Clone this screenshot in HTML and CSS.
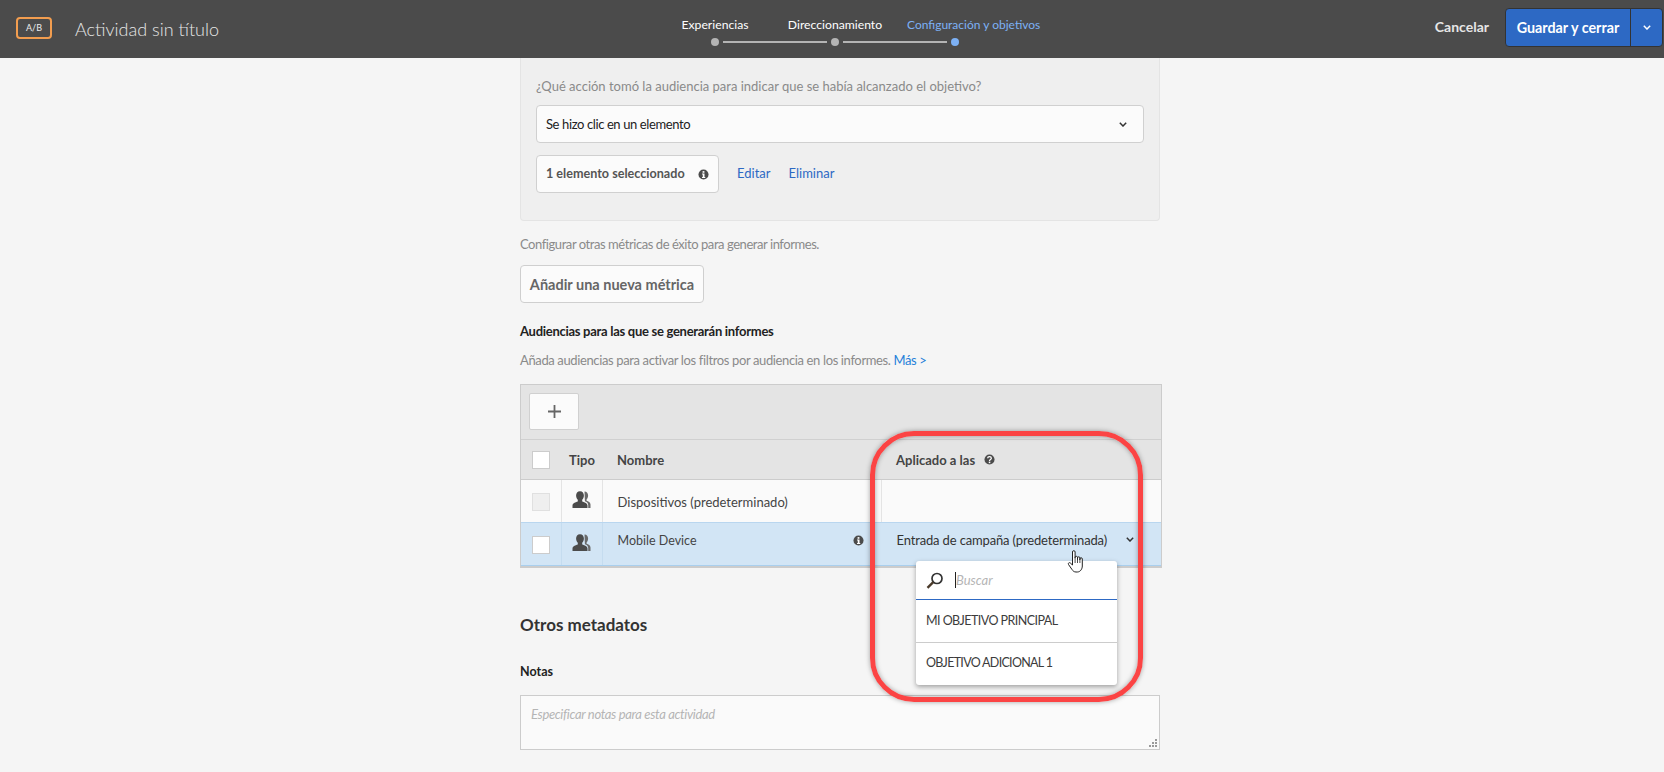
FILE: index.html
```html
<!DOCTYPE html>
<html lang="es">
<head>
    <meta charset="UTF-8">
    <meta name="viewport" content="width=device-width, initial-scale=1.0">
    <title>Actividad sin título</title>
    <link rel="stylesheet" href="styles.css">
</head>
<body>

    <svg class="defs" width="0" height="0">
        <symbol id="chevron" viewBox="0 0 8 5">
            <path d="M.8 .8 4 4 7.2 .8" fill="none" stroke="currentColor" stroke-width="1.5"/>
        </symbol>
        <symbol id="info" viewBox="0 0 12 12">
            <circle cx="6" cy="6" r="5.5" fill="currentColor"/>
            <rect x="5" y="2.3" width="2" height="1.8" fill="#fff"/>
            <path d="M4.4 5h2.7v3.7h.8v1H4.4v-1h.8V6h-.8z" fill="#fff"/>
        </symbol>
        <symbol id="person" viewBox="0 0 19 17">
            <path d="M12.5 .6c2.4 0 3.6 1.9 3.6 4 0 1.600-.7 3-1.500 3.900v1.300c1.700.6 3.900 1.500 3.900 3.700V17h-2.300v-3c0-2-1.500-3-3.300-3.700z" fill="#6a6a6a"/>
            <path d="M8 .3c2.600 0 3.900 2 3.900 4.300 0 1.700-.8 3.300-1.700 4.200v1.700c2.500.8 5.300 1.700 5.300 4V17H.5v-2.500c0-2.300 2.800-3.200 5.300-4V8.800C4.900 7.900 4.100 6.300 4.100 4.600 4.100 2.300 5.400.3 8 .3z" fill="#4b4b4b"/>
        </symbol>
    </svg>

    <header class="topbar">
        <div class="topbar-left">
            <span class="ab-badge">A/B</span>
            <span class="activity-title">Actividad sin título</span>
        </div>

        <nav class="stepper">
            <div class="step-labels">
                <span>Experiencias</span>
                <span>Direccionamiento</span>
                <span class="current">Configuración y objetivos</span>
            </div>
            <div class="step-track">
                <i class="dot"></i><i class="line"></i><i class="dot"></i><i class="line"></i><i class="dot current"></i>
            </div>
        </nav>

        <div class="topbar-right">
            <span class="cancel">Cancelar</span>
            <div class="save-group">
                <span class="save">Guardar y cerrar</span>
                <span class="save-more"><svg class="chevron"><use href="#chevron"/></svg></span>
            </div>
        </div>
    </header>

    <main class="content">
        <section class="goal-panel">
            <p class="hint">¿Qué acción tomó la audiencia para indicar que se había alcanzado el objetivo?</p>
            <div class="select">
                <span>Se hizo clic en un elemento</span>
                <svg class="chevron"><use href="#chevron"/></svg>
            </div>
            <div class="selection-row">
                <div class="selected-box">
                    <span>1 elemento seleccionado</span>
                    <svg class="info"><use href="#info"/></svg>
                </div>
                <a class="link">Editar</a>
                <a class="link">Eliminar</a>
            </div>
        </section>

        <p class="hint metrics-hint">Configurar otras métricas de éxito para generar informes.</p>
        <button class="add-metric" type="button">Añadir una nueva métrica</button>

        <h3 class="sub-title">Audiencias para las que se generarán informes</h3>
        <p class="hint audience-hint">Añada audiencias para activar los filtros por audiencia en los informes. <a class="more">Más &gt;</a></p>

        <div class="audience-box">
            <div class="toolbar">
                <button class="add-btn" type="button">
                    <svg width="13" height="13" viewBox="0 0 13 13"><path d="M6.500 0v13M0 6.500h13" stroke="#666" stroke-width="1.800"/></svg>
                </button>
            </div>
            <table class="audience-table">
                <thead>
                    <tr>
                        <th class="col-check"><span class="checkbox"></span></th>
                        <th class="col-type">Tipo</th>
                        <th class="col-name">Nombre</th>
                        <th class="col-applied">
                            Aplicado a las
                            <svg class="help" viewBox="0 0 12 12">
                                <circle cx="6" cy="6" r="5.500" fill="#4b4b4b"/>
                                <path d="M4 4.600c0-2.300 4-2.300 4 0 0 1.500-2 1.400-2 2.900" fill="none" stroke="#fff" stroke-width="1.400"/>
                                <rect x="5.200" y="8.300" width="1.700" height="1.700" fill="#fff"/>
                            </svg>
                        </th>
                    </tr>
                </thead>
                <tbody>
                    <tr>
                        <td class="col-check"><span class="checkbox disabled"></span></td>
                        <td class="col-type"><svg class="person"><use href="#person"/></svg></td>
                        <td class="col-name">Dispositivos (predeterminado)</td>
                        <td class="col-applied"></td>
                    </tr>
                    <tr class="selected">
                        <td class="col-check"><span class="checkbox"></span></td>
                        <td class="col-type"><svg class="person"><use href="#person"/></svg></td>
                        <td class="col-name">
                            <div class="name-cell">Mobile Device <svg class="info"><use href="#info"/></svg></div>
                        </td>
                        <td class="col-applied">
                            <div class="applied-cell">Entrada de campaña (predeterminada) <svg class="chevron"><use href="#chevron"/></svg></div>
                        </td>
                    </tr>
                </tbody>
            </table>
        </div>

        <h2 class="section-title">Otros metadatos</h2>
        <h3 class="notes-label">Notas</h3>
        <div class="notes">
            <span class="notes-placeholder">Especificar notas para esta actividad</span>
            <svg class="grip" width="8" height="8" viewBox="0 0 8 8">
                <path d="M6 0h2v2H6zM3 3h2v2H3zM6 3h2v2H6zM0 6h2v2H0zM3 6h2v2H3zM6 6h2v2H6z" fill="#9a9a9a"/>
            </svg>
        </div>

        <!-- menu abierto sobre la tabla -->
        <div class="goal-menu">
            <div class="menu-search">
                <svg width="18" height="17" viewBox="0 0 18 17">
                    <circle cx="11" cy="6.500" r="5" fill="none" stroke="#333" stroke-width="1.700"/>
                    <path d="M7.200 10.200 1.500 15.800" stroke="#4a3a2a" stroke-width="2.400"/>
                </svg>
                <i class="caret"></i>
                <span class="menu-placeholder">Buscar</span>
            </div>
            <div class="menu-item">MI OBJETIVO PRINCIPAL</div>
            <div class="menu-item">OBJETIVO ADICIONAL 1</div>
        </div>

        <!-- marca roja de la captura -->
        <div class="callout"></div>

        <svg class="hand" width="18" height="24" viewBox="0 0 18 24">
            <path d="M5.500 13V3a1.300 1.300 0 0 1 2.600 0v6.500-1a1.200 1.200 0 0 1 2.400 0v2-1.500a1.200 1.200 0 0 1 2.400 0v2-1a1.200 1.200 0 0 1 2.400 0V17c0 3-2 6-5 6H9c-2 0-3-1-4-2.500L1.500 15.500c-.8-1.200.8-2.500 1.800-1.500l2.200 2z" fill="#fff" stroke="#222" stroke-width="1"/>
            <path d="M8.100 10v4M10.500 10v4M12.900 11v3" stroke="#222" stroke-width=".8"/>
        </svg>
    </main>

</body>
</html>
```

FILE: styles.css
```css
* {
    box-sizing: border-box;
}

html, body {
    height: 772px;
    overflow: hidden;
}

body {
    margin: 0;
    font-family: "Lato", "Open Sans", sans-serif;
    font-size: 13px;
    line-height: 20px;
    color: #333;
    background-color: #f5f5f5;
}

p, h2, h3 {
    margin: 0;
}

.defs {
    display: block;
    height: 0;
}

.chevron {
    width: 8px;
    height: 5px;
    color: #333;
    flex: none;
}

.info {
    width: 11px;
    height: 11px;
    color: #4b4b4b;
    flex: none;
}

/* barra superior */
.topbar {
    height: 58px;
    background-color: #4b4b4b;
    display: grid;
    grid-template-columns: 655px 360px 1fr;
}

.topbar-left {
    display: flex;
    align-items: center;
    padding: 2px 0 0 16px;
}

.ab-badge {
    width: 36px;
    height: 22px;
    margin-top: -4px;
    border: 2px solid #f29d4f;
    border-radius: 4px;
    color: #eee;
    font-size: 9px;
    line-height: 18px;
    text-align: center;
}

.activity-title {
    margin: -3px 0 0 23px;
    font-size: 18px;
    font-weight: 300;
    color: #e6e6e6;
}

.stepper {
    padding-top: 15px;
}

.step-labels {
    display: grid;
    grid-template-columns: repeat(3, 120px);
    height: 20px;
    justify-items: center;
    font-size: 12.200px;
    color: #fff;
    white-space: nowrap;
}

.step-labels .current {
    justify-self: start;
    margin-left: 12px;
    font-size: 12px;
    color: #7db1f5;
}

.step-track {
    display: flex;
    align-items: center;
    gap: 4px;
    width: 248px;
    margin: 3px auto 0;
}

.dot {
    width: 8px;
    height: 8px;
    border-radius: 50%;
    background-color: #b4b4b4;
    flex: none;
}

.dot.current {
    background-color: #7db1f5;
}

.line {
    flex: 1;
    height: 2px;
    background-color: #b4b4b4;
}

.topbar-right {
    display: flex;
    justify-content: flex-end;
    align-items: flex-start;
    padding: 8px 1px 0 0;
}

.cancel {
    margin: 9px 16px 0 0;
    font-size: 14px;
    font-weight: 700;
    color: #e6e6e6;
}

.save-group {
    display: flex;
    width: 158px;
    height: 39px;
    border: 1px solid #333;
    border-radius: 4px;
    background-color: #2d69c4;
    color: #fff;
    overflow: hidden;
}

.save {
    width: 125px;
    border-right: 1px solid #333;
    font-size: 14.300px;
    font-weight: 700;
    line-height: 37px;
    text-align: center;
}

.save-more {
    flex: 1;
    display: flex;
    align-items: center;
    justify-content: center;
}

.save-more .chevron {
    color: #fff;
}

/* columna central */
.content {
    position: relative;
    width: 642px;
    margin-left: 520px;
}

.hint {
    color: #8a8a8a;
}

.goal-panel {
    width: 640px;
    height: 163px;
    padding: 18px 15px 0;
    background-color: #efefef;
    border: 1px solid #e4e4e4;
    border-top: 0;
    border-radius: 0 0 4px 4px;
}

.select {
    display: flex;
    align-items: center;
    justify-content: space-between;
    height: 38px;
    margin-top: 9px;
    padding: 0 16px 0 9px;
    background-color: #fbfbfb;
    border: 1px solid #d0d0d0;
    border-radius: 4px;
    letter-spacing: -0.39px;
    color: #222;
}

.selection-row {
    display: flex;
    align-items: center;
    margin-top: 12px;
}

.selected-box {
    display: flex;
    align-items: center;
    width: 183px;
    height: 38px;
    padding: 0 9px;
    justify-content: space-between;
    background-color: #fbfbfb;
    border: 1px solid #d0d0d0;
    border-radius: 4px;
    font-size: 12.600px;
    font-weight: 700;
    color: #555;
}

.link {
    margin: -2px 0 0 18px;
    color: #2d69c4;
}

.metrics-hint {
    margin-top: 13px;
    letter-spacing: -0.44px;
}

.add-metric {
    display: block;
    width: 184px;
    height: 38px;
    margin-top: 11px;
    padding: 0;
    background-color: #fbfbfb;
    border: 1px solid #cfcfcf;
    border-radius: 4px;
    font: 700 14.500px "Lato", sans-serif;
    color: #666;
}

.sub-title {
    margin-top: 18px;
    font-size: 13px;
    letter-spacing: -0.28px;
    font-weight: 700;
    color: #222;
}

.audience-hint {
    margin-top: 9px;
    letter-spacing: -0.37px;
}

.more {
    color: #2680d9;
}

.audience-box {
    margin-top: 14px;
    border: 1px solid #ccc;
    border-bottom-width: 2px;
    background-color: #e4e4e4;
}

.toolbar {
    height: 55px;
    padding: 8px 0 0 8px;
    border-bottom: 1px solid #d0d0d0;
}

.add-btn {
    display: flex;
    align-items: center;
    justify-content: center;
    width: 50px;
    height: 37px;
    padding: 0;
    background-color: #fbfbfb;
    border: 1px solid #d0d0d0;
    border-radius: 2px;
}

.audience-table {
    width: 100%;
    table-layout: fixed;
    border-collapse: collapse;
}

.audience-table th {
    height: 39px;
    font-weight: 700;
    text-align: left;
    color: #444;
    padding: 2px 0 0;
    border-bottom: 1px solid #ccc;
}

.audience-table td {
    height: 43px;
    padding: 2px 0 0;
    background-color: #fafafa;
    color: #444;
    border-bottom: 1px solid #b9d6ef;
}

.audience-table tr.selected td {
    background-color: #d2e5f5;
    border-bottom: 1px solid #a9cfee;
}

.audience-table td.col-type {
    border-left: 1px solid #e4e4e4;
    border-right: 1px solid #e4e4e4;
}

.audience-table td.col-applied {
    border-left: 1px solid #e4e4e4;
}

.audience-table tr.selected td {
    border-left-color: #c5dcef;
    border-right-color: #c5dcef;
}

.audience-table tr.selected td.col-applied {
    border-left-color: transparent;
}

.col-check {
    width: 40px;
    padding-left: 11px !important;
}

.col-type {
    width: 41px;
}

th.col-type {
    padding-left: 8px !important;
}

td.col-type {
    text-align: center;
}

.col-name {
    width: 279px;
    padding-left: 15px !important;
}

.col-applied {
    padding-left: 15px !important;
}

.checkbox {
    display: block;
    width: 18px;
    height: 18px;
    background-color: #fff;
    border: 1px solid #ccc;
}

.checkbox.disabled {
    background-color: #efefef;
    border-color: #e0e0e0;
}

.person {
    display: block;
    width: 19px;
    height: 17px;
    margin: 0 auto 4px;
}

.help {
    width: 11px;
    height: 11px;
    margin-left: 6px;
}

.name-cell {
    display: flex;
    align-items: center;
    justify-content: space-between;
    padding: 0 17px 8px 0;
    font-size: 12.500px;
}

.applied-cell {
    display: flex;
    align-items: center;
    justify-content: space-between;
    padding: 0 27px 10px 0;
    letter-spacing: -0.15px;
    color: #333;
    white-space: nowrap;
}

.section-title {
    margin-top: 45px;
    font-size: 17px;
    line-height: 24px;
    font-weight: 700;
    color: #333;
}

.notes-label {
    margin-top: 25px;
    font-size: 12.500px;
    font-weight: 700;
    color: #222;
}

.notes {
    position: relative;
    width: 640px;
    height: 55px;
    margin-top: 13px;
    padding: 8px 10px;
    background-color: #fafafa;
    border: 1px solid #ccc;
    letter-spacing: -0.34px;
}

.notes-placeholder {
    font-style: italic;
    color: #b5b5b5;
}

.grip {
    position: absolute;
    right: 2px;
    bottom: 2px;
}

/* menu abierto */
.goal-menu {
    position: absolute;
    left: 396px;
    top: 503px;
    width: 201px;
    height: 124px;
    background-color: #fff;
    border-radius: 3px;
    box-shadow: 0 2px 5px rgba(0, 0, 0, 0.35);
}

.menu-search {
    display: flex;
    align-items: center;
    height: 39px;
    padding-left: 10px;
    border-bottom: 1px solid #2d69c4;
}

.caret {
    width: 1px;
    height: 16px;
    margin-left: 11px;
    background-color: #222;
}

.menu-placeholder {
    font-style: italic;
    color: #b5b5b5;
}

.menu-item {
    height: 42px;
    padding: 11px 10px 0;
    font-size: 12.500px;
    letter-spacing: -0.55px;
    color: #3c3c3c;
}

.menu-item + .menu-item {
    height: 43px;
    padding-top: 10px;
    border-top: 1px solid #ccc;
    letter-spacing: -0.7px;
}

.callout {
    position: absolute;
    left: 350px;
    top: 373px;
    width: 273px;
    height: 271px;
    border: 5px solid #fb4444;
    border-radius: 44px;
    box-shadow: 0 0 5px rgba(0, 0, 0, 0.35), inset 0 0 5px rgba(0, 0, 0, 0.35);
}

.hand {
    position: absolute;
    left: 547px;
    top: 491px;
}
```
